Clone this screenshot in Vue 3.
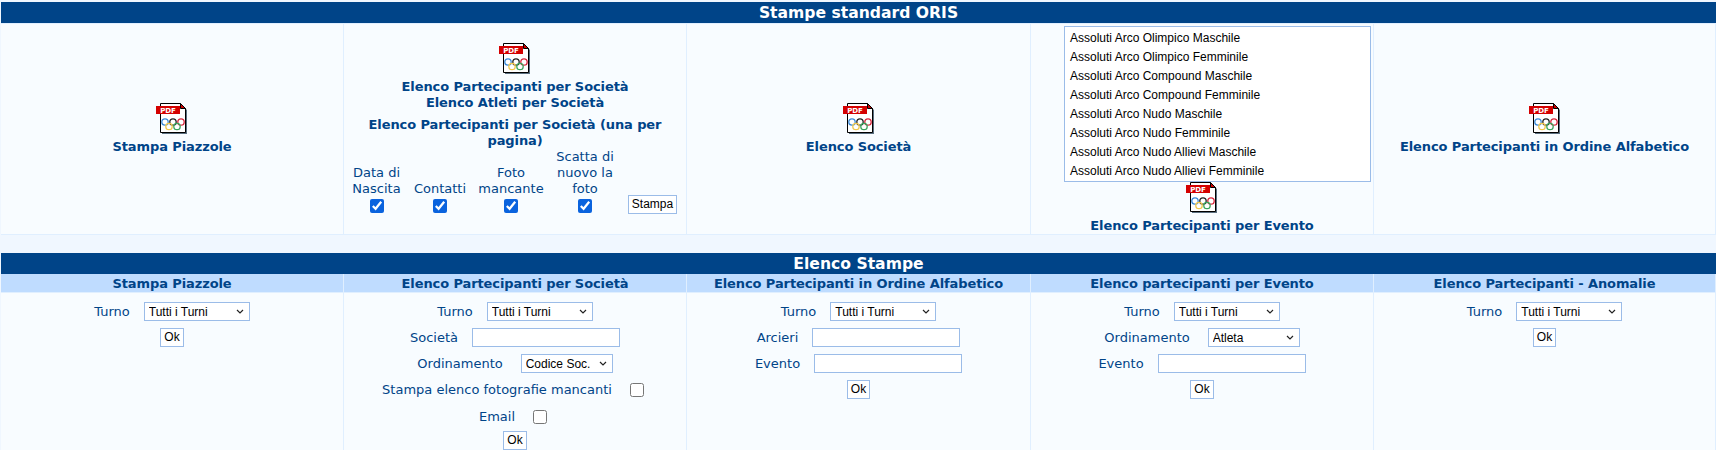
<script setup>
const specialities = [
  'Assoluti Arco Olimpico Maschile',
  'Assoluti Arco Olimpico Femminile',
  'Assoluti Arco Compound Maschile',
  'Assoluti Arco Compound Femminile',
  'Assoluti Arco Nudo Maschile',
  'Assoluti Arco Nudo Femminile',
  'Assoluti Arco Nudo Allievi Maschile',
  'Assoluti Arco Nudo Allievi Femminile',
]
const extras = [
  { label: 'Data di\nNascita' },
  { label: 'Contatti' },
  { label: 'Foto\nmancante' },
  { label: 'Scatta di\nnuovo la\nfoto' },
]
</script>

<template>
  <div class="page">
    <section class="block">
      <h2 class="title">Stampe standard ORIS</h2>
      <div class="cols">
        <div class="cell mid">
          <svg class="pdf" viewBox="0 0 32 31">
            <use href="#pdf-icon" />
          </svg>
          <a class="link">Stampa Piazzole</a>
        </div>
        <div class="cell mid">
          <svg class="pdf" viewBox="0 0 32 31">
            <use href="#pdf-icon" />
          </svg>
          <a class="link">Elenco Partecipanti per Società</a>
          <a class="link">Elenco Atleti per Società</a>
          <a class="link second">Elenco Partecipanti per Società (una per pagina)</a>
          <div class="extras">
            <label v-for="e in extras" :key="e.label" class="extra">
              <span>{{ e.label }}</span>
              <input type="checkbox" checked />
            </label>
            <div class="extra"><button class="btn">Stampa</button></div>
          </div>
        </div>
        <div class="cell mid">
          <svg class="pdf" viewBox="0 0 32 31">
            <use href="#pdf-icon" />
          </svg>
          <a class="link">Elenco Società</a>
        </div>
        <div class="cell events">
          <select class="list" multiple size="8">
            <option v-for="s in specialities" :key="s">{{ s }}</option>
          </select>
          <svg class="pdf" viewBox="0 0 32 31">
            <use href="#pdf-icon" />
          </svg>
          <a class="link">Elenco Partecipanti per Evento</a>
        </div>
        <div class="cell mid">
          <svg class="pdf" viewBox="0 0 32 31">
            <use href="#pdf-icon" />
          </svg>
          <a class="link">Elenco Partecipanti in Ordine Alfabetico</a>
        </div>
      </div>
    </section>

    <section class="block lower">
      <h2 class="title">Elenco Stampe</h2>
      <div class="cols heads">
        <div class="head">Stampa Piazzole</div>
        <div class="head">Elenco Partecipanti per Società</div>
        <div class="head">Elenco Partecipanti in Ordine Alfabetico</div>
        <div class="head">Elenco partecipanti per Evento</div>
        <div class="head">Elenco Partecipanti - Anomalie</div>
      </div>
      <div class="cols">
        <div class="cell form">
          <div class="row"><span>Turno</span><select class="sel"><option>Tutti i Turni</option></select></div>
          <div class="row"><button class="btn">Ok</button></div>
        </div>
        <div class="cell form">
          <div class="row"><span>Turno</span><select class="sel"><option>Tutti i Turni</option></select></div>
          <div class="row"><span>Società</span><input class="txt" type="text" /></div>
          <div class="row wide"><span>Ordinamento</span><select class="sel short"><option>Codice Soc.</option></select></div>
          <div class="row check"><span>Stampa elenco fotografie mancanti</span><input type="checkbox" /></div>
          <div class="row check"><span>Email</span><input type="checkbox" /></div>
          <div class="row ok-after"><button class="btn">Ok</button></div>
        </div>
        <div class="cell form">
          <div class="row"><span>Turno</span><select class="sel"><option>Tutti i Turni</option></select></div>
          <div class="row"><span>Arcieri</span><input class="txt" type="text" /></div>
          <div class="row"><span>Evento</span><input class="txt" type="text" /></div>
          <div class="row"><button class="btn">Ok</button></div>
        </div>
        <div class="cell form">
          <div class="row"><span>Turno</span><select class="sel"><option>Tutti i Turni</option></select></div>
          <div class="row wide"><span>Ordinamento</span><select class="sel short"><option>Atleta</option></select></div>
          <div class="row"><span>Evento</span><input class="txt" type="text" /></div>
          <div class="row"><button class="btn">Ok</button></div>
        </div>
        <div class="cell form">
          <div class="row"><span>Turno</span><select class="sel"><option>Tutti i Turni</option></select></div>
          <div class="row"><button class="btn">Ok</button></div>
        </div>
      </div>
    </section>

    <svg width="0" height="0" class="defs">
      <defs>
        <g id="pdf-icon">
          <path d="M6 2h20l5 5v24H6z" fill="#5a6f80" />
          <path d="M4.5 .5h20l5 5v24h-25z" fill="#fff" stroke="#000" />
          <path d="M24.5 .5v5h5z" fill="#c00" stroke="#000" />
          <rect x="0" y="3" width="24" height="8" fill="#d40000" />
          <text x="12" y="9.6" class="pdf-text">PDF</text>
          <g fill="none" stroke-width="1.3">
            <circle cx="9" cy="19" r="3.2" stroke="#3b8ad9" />
            <circle cx="17" cy="19" r="3.2" stroke="#222" />
            <circle cx="25" cy="19" r="3.2" stroke="#d8263c" />
            <circle cx="13" cy="23.5" r="3.2" stroke="#f1c84c" />
            <circle cx="21" cy="23.5" r="3.2" stroke="#3aa35c" />
          </g>
        </g>
      </defs>
    </svg>
  </div>
</template>

<style scoped>
.page {
  height: 450px;
  overflow: hidden;
  padding: 2px 0 0 1px;
  box-sizing: border-box;
  background: #f0f7ff;
  font-family: "DejaVu Sans", Verdana, sans-serif;
  font-size: 13px;
  line-height: 16px;
  color: #004488;
}
.defs {
  position: absolute;
}
.lower {
  margin-top: 18px;
}
.title {
  margin: 0;
  height: 21px;
  line-height: 22px;
  background: #004488;
  color: #fff;
  font-size: 15.6px;
  font-weight: bold;
  text-align: center;
}
.cols {
  display: grid;
  grid-template-columns: 343px 343px 344px 343px 1fr;
}
.cell {
  display: flex;
  flex-direction: column;
  align-items: center;
  background: #f8fcff;
  border: 1px solid #e0efff;
  border-left-width: 0;
  box-sizing: border-box;
  text-align: center;
}
.mid {
  justify-content: center;
}
.events {
  padding-top: 2px;
}
.pdf {
  display: block;
  width: 32px;
  height: 31px;
  flex: none;
  margin-bottom: 5px;
}
.pdf-text {
  font-family: "DejaVu Sans", sans-serif;
  font-size: 7px;
  font-weight: bold;
  fill: #fff;
  text-anchor: middle;
}
.link {
  display: block;
  font-size: 13px;
  letter-spacing: -0.1px;
  font-weight: bold;
  color: #004488;
}
.second {
  margin-top: 6px;
}
.list {
  width: 307px;
  height: 156px;
  margin: 0 2px 0 0;
  padding: 4px 0 0;
  align-self: flex-end;
  border: 1px solid #9bbce8;
  border-radius: 0;
  background: #fff;
  font-family: "Liberation Sans", Arial, sans-serif;
  font-size: 12px;
  overflow: hidden;
  outline: none;
}
.list option {
  height: 19px;
  line-height: 19px;
  padding: 0 5px;
  min-height: 0;
  color: #000;
}
.extras {
  display: grid;
  grid-template-columns: 63px 64px 78px 70px 65px;
  align-items: end;
}
.extra {
  display: flex;
  flex-direction: column;
  align-items: center;
  white-space: pre-line;
}
input[type="checkbox"] {
  accent-color: #0a63de;
}
.extra input {
  width: 14px;
  height: 14px;
  margin: 2px 0 2px;
}
.btn {
  height: 19px;
  padding: 0 3px;
  margin-bottom: 1px;
  border: 1px solid #9bbce8;
  border-radius: 0;
  background: #fff;
  color: #000;
  font-family: "Liberation Sans", Arial, sans-serif;
  font-size: 12px;
  line-height: 17px;
}
.head {
  height: 19px;
  line-height: 19px;
  background: #bfdcff;
  border-right: 1px solid #e0efff;
  border-bottom: 1px solid #e0efff;
  box-sizing: border-box;
  font-size: 13px;
  letter-spacing: -0.1px;
  font-weight: bold;
  text-align: center;
  white-space: nowrap;
}
.form {
  min-height: 160px;
  padding-top: 9px;
  gap: 7px;
  border-top: 0;
}
.row {
  display: flex;
  align-items: center;
  justify-content: center;
  gap: 14px;
  min-height: 19px;
}
.row.wide {
  gap: 18px;
}
.sel,
.txt {
  box-sizing: border-box;
  height: 19px;
  border: 1px solid #9bbce8;
  border-radius: 0;
  background: #fff;
  font-family: "Liberation Sans", Arial, sans-serif;
  font-size: 12px;
  color: #000;
}
.sel {
  width: 106px;
  padding: 0 16px 0 4px;
  appearance: none;
  background: #fff url("data:image/svg+xml,%3Csvg xmlns='http://www.w3.org/2000/svg' width='8' height='5'%3E%3Cpath d='M1 1l3 3 3-3' fill='none' stroke='%23222' stroke-width='1.2'/%3E%3C/svg%3E") no-repeat right 5px center;
}
.sel.short {
  width: 92px;
}
.txt {
  width: 148px;
  padding: 0 3px;
  outline: none;
}
.check {
  min-height: 20px;
}
.check input {
  width: 14px;
  height: 14px;
  margin: 0 4px;
}
.ok-after {
  margin-top: -3px;
}
</style>
